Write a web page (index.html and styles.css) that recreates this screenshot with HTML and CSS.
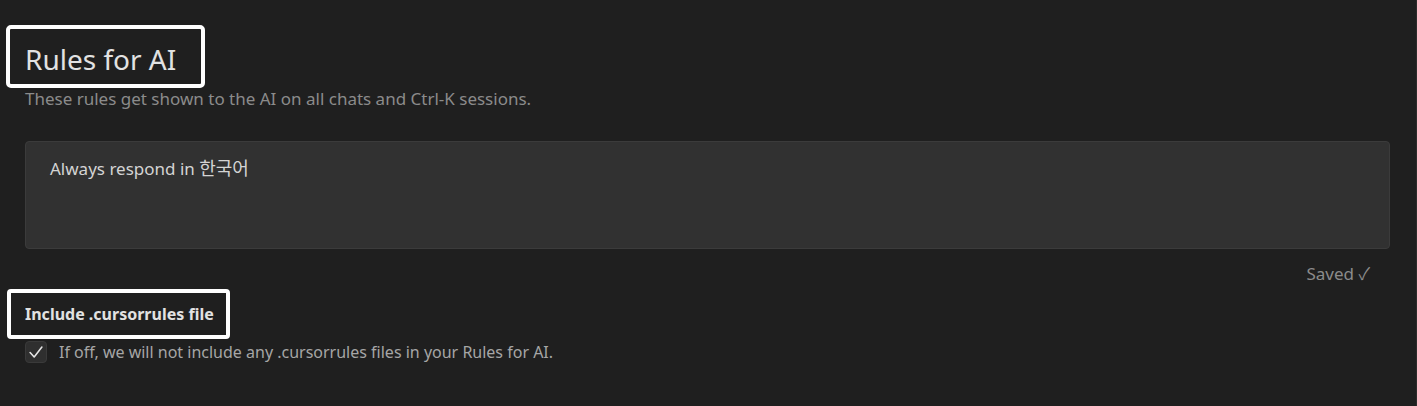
FILE: index.html
```html
<!DOCTYPE html>
<html>
<head>
<meta charset="utf-8">
<link rel="stylesheet" href="styles.css">
</head>
<body>
<div class="page">
  <div class="title-wrap"><h1 class="title">Rules for AI</h1></div>
  <p class="subtitle">These rules get shown to the AI on all chats and Ctrl-K sessions.</p>
  <div class="rules-box">
    <div class="rules-text">Always respond in <span class="ko">한국어</span></div>
  </div>
  <div class="saved-row"><span class="saved">Saved ✓</span></div>
  <div class="section-wrap"><h2 class="section-title">Include .cursorrules file</h2></div>
  <label class="check-row">
    <span class="checkbox">
      <svg width="22" height="22" viewBox="0 0 22 22"><polyline points="4.5,11.5 9,16.5 17.5,5.5" fill="none" stroke="#e6e6e6" stroke-width="1.7" stroke-linecap="round" stroke-linejoin="round"/></svg>
    </span>
    <span class="check-label">If off, we will not include any .cursorrules files in your Rules for AI.</span>
  </label>
</div>
</body>
</html>
```
FILE: styles.css
```css
html, body {
  margin: 0;
  padding: 0;
  background: #1f1f1f;
  height: 100%;
}
body {
  font-family: "Noto Sans", "Noto Sans CJK KR", sans-serif;
  border-right: 1px solid #2c2c2c;
  box-sizing: border-box;
  overflow: hidden;
}
.page {
  padding: 25px 26px 0 25px;
}
.title-wrap {
  display: flex;
}
.title {
  margin: 0 0 0 -19px;
  border: 4px solid #ffffff;
  border-radius: 5px;
  padding: 12px 25px 6px 15px;
  font-size: 28px;
  font-weight: 400;
  line-height: 37px;
  color: #e2e2e2;
}
.subtitle {
  margin: 0;
  font-size: 17px;
  line-height: 22px;
  color: #8b8b8b;
}
.rules-box {
  margin-top: 31px;
  height: 108px;
  background: #313131;
  border: 1px solid #3b3b3b;
  border-radius: 4px;
  padding: 13px 24px;
  box-sizing: border-box;
}
.rules-text {
  font-size: 17px;
  line-height: 26px;
  color: #d4d4d4;
}
.ko {
  font-size: 18px;
}
.saved-row {
  display: flex;
  justify-content: flex-end;
  padding-right: 20px;
  margin-top: 12px;
}
.saved {
  font-size: 17px;
  line-height: 26px;
  color: #8b8b8b;
}
.section-wrap {
  display: flex;
  margin-top: 2px;
}
.section-title {
  margin: 0 0 0 -18px;
  border: 4px solid #ffffff;
  border-radius: 4px;
  padding: 10px 12px 10px 14px;
  font-size: 16px;
  font-weight: 700;
  line-height: 22px;
  color: #e2e2e2;
}
.check-row {
  display: flex;
  align-items: center;
  gap: 12px;
  margin-top: 2px;
}
.checkbox {
  width: 22px;
  height: 22px;
  border-radius: 4px;
  background: #2f2f2f;
  border: 1px solid #3a3a3a;
  box-sizing: border-box;
  display: flex;
  align-items: center;
  justify-content: center;
}
.checkbox svg {
  display: block;
}
.check-label {
  font-size: 16px;
  line-height: 22px;
  color: #a6a6a6;
}
```
